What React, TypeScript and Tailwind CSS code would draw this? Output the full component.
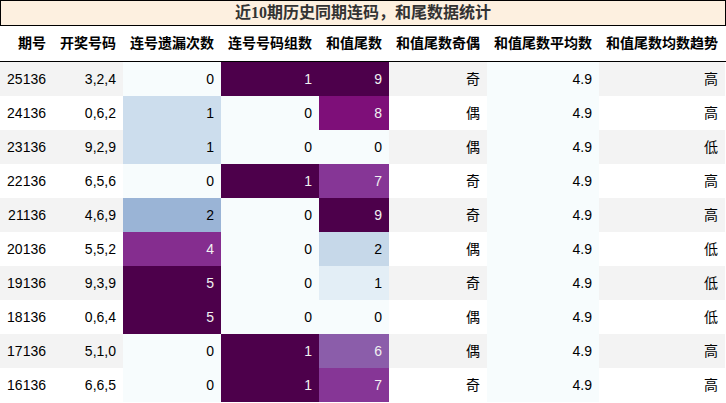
import React from "react";

type Cell = { v: string; bg?: string; light?: boolean };

const BUPU = {
  c0: "#f7fcfd",
};

function c3(v: number): { bg: string; light: boolean } {
  const m: Record<number, [string, boolean]> = {
    0: ["#f7fcfd", false],
    1: ["#ccdded", false],
    2: ["#9ab4d6", false],
    4: ["#852d8f", true],
    5: ["#4d004b", true],
  };
  const [bg, light] = m[v];
  return { bg, light };
}
function c4(v: number) {
  return v === 1 ? { bg: "#4d004b", light: true } : { bg: "#f7fcfd", light: false };
}
function c5(v: number) {
  const m: Record<number, [string, boolean]> = {
    0: ["#f7fcfd", false],
    1: ["#e3eef6", false],
    2: ["#c6d8e9", false],
    6: ["#8b5daa", true],
    7: ["#863696", true],
    8: ["#7e0f79", true],
    9: ["#4d004b", true],
  };
  const [bg, light] = m[v];
  return { bg, light };
}

const rows: [string, string, number, number, number, string, string][] = [
  ["25136", "3,2,4", 0, 1, 9, "奇", "高"],
  ["24136", "0,6,2", 1, 0, 8, "偶", "高"],
  ["23136", "9,2,9", 1, 0, 0, "偶", "低"],
  ["22136", "6,5,6", 0, 1, 7, "奇", "高"],
  ["21136", "4,6,9", 2, 0, 9, "奇", "高"],
  ["20136", "5,5,2", 4, 0, 2, "偶", "低"],
  ["19136", "9,3,9", 5, 0, 1, "奇", "低"],
  ["18136", "0,6,4", 5, 0, 0, "偶", "低"],
  ["17136", "5,1,0", 0, 1, 6, "偶", "高"],
  ["16136", "6,6,5", 0, 1, 7, "奇", "高"],
];

const headers = ["期号", "开奖号码", "连号遗漏次数", "连号号码组数", "和值尾数", "和值尾数奇偶", "和值尾数平均数", "和值尾数均数趋势"];

const grid = "grid grid-cols-[53px_70px_98px_98px_70px_98px_112px_126px]";

export default function App() {
  return (
    <div
      className="w-[726px] h-[403px] bg-white overflow-hidden"
      style={{ fontFamily: '"Liberation Sans", "Noto Sans CJK SC", sans-serif' }}
    >
      <div
        className="w-[726px] h-[26px] border border-black bg-[#fdf0e0] flex items-center justify-center text-[16px] font-bold text-[#333333] leading-none"
        style={{ fontFamily: '"Liberation Serif", "Noto Sans CJK SC", serif' }}
      >
        近10期历史同期连码，和尾数据统计
      </div>
      <div className={`${grid} h-[36px] border-b border-black text-[14px] font-bold text-black`}>
        {headers.map((h) => (
          <div key={h} className="flex items-center justify-end pr-[7px] whitespace-nowrap">
            {h}
          </div>
        ))}
      </div>
      {rows.map((r, i) => {
        const plain = i % 2 === 0 ? "#f3f3f3" : "#ffffff";
        const cells: Cell[] = [
          { v: r[0], bg: plain },
          { v: r[1], bg: plain },
          { v: String(r[2]), ...c3(r[2]) },
          { v: String(r[3]), ...c4(r[3]) },
          { v: String(r[4]), ...c5(r[4]) },
          { v: r[5], bg: plain },
          { v: "4.9", bg: BUPU.c0 },
          { v: r[6], bg: plain },
        ];
        return (
          <div key={r[0]} className={`${grid} h-[34px] text-[14px]`}>
            {cells.map((c, j) => (
              <div
                key={j}
                className={`flex items-center justify-end pr-[7px] ${c.light ? "text-[#f1f1f1]" : "text-black"}`}
                style={{ backgroundColor: c.bg }}
              >
                {c.v}
              </div>
            ))}
          </div>
        );
      })}
    </div>
  );
}
